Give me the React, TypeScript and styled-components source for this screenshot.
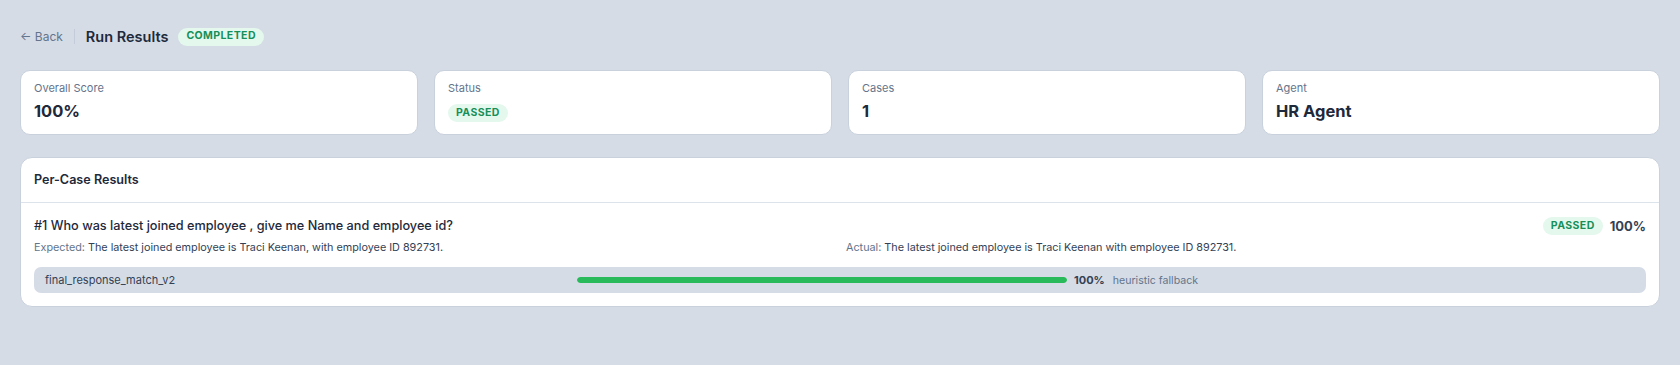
import styled, { createGlobalStyle } from "styled-components";

const GlobalStyle = createGlobalStyle`
  body {
    margin: 0;
    background: #d5dce6;
    font-family: Inter, "Noto Sans", sans-serif;
    color: #1e293b;
  }
`;

const Page = styled.div`
  padding: 20px;
`;

const Header = styled.header`
  display: flex;
  align-items: center;
  height: 33px;
  margin-bottom: 17px;
`;

const BackLink = styled.a`
  font-size: 12px;
  color: #64748b;
  text-decoration: none;
  cursor: pointer;
`;

const Divider = styled.span`
  width: 1px;
  height: 15px;
  background: #c3ccd8;
  margin: 0 11px 0 11px;
`;

const Title = styled.h1`
  font-size: 14.5px;
  font-weight: 600;
  margin: 0 10px 0 0;
  color: #1e293b;
`;

const Badge = styled.span`
  display: inline-flex;
  align-items: center;
  height: 18px;
  padding: 0 8px;
  border-radius: 9px;
  background: #e4f8ed;
  color: #178f58;
  font-size: 10.5px;
  font-weight: 700;
  letter-spacing: 0.04em;
  line-height: 1;
`;

const StatGrid = styled.div`
  display: grid;
  grid-template-columns: repeat(4, 1fr);
  gap: 16px;
  margin-bottom: 22px;
`;

const StatCard = styled.div`
  background: #fff;
  border: 1px solid #c8d1dc;
  border-radius: 10px;
  padding: 9px 13px 12px;
`;

const StatLabel = styled.div`
  font-size: 11px;
  line-height: 16px;
  color: #64748b;
  margin-bottom: 4px;
`;

const StatValue = styled.div`
  font-size: 16.5px;
  line-height: 22px;
  font-weight: 700;
  color: #1e293b;
`;

const StatBadgeRow = styled.div`
  height: 22px;
  display: flex;
  align-items: flex-end;
`;

const Panel = styled.section`
  background: #fff;
  border: 1px solid #c8d1dc;
  border-radius: 12px;
`;

const PanelHeader = styled.div`
  padding: 13px 13px;
  font-size: 12.6px;
  line-height: 18px;
  font-weight: 600;
  color: #1e293b;
  border-bottom: 1px solid #dde3ea;
`;

const CaseBody = styled.div`
  padding: 14px 13px 13px;
`;

const CaseTop = styled.div`
  display: flex;
  align-items: center;
  justify-content: space-between;
`;

const Question = styled.div`
  font-size: 12.7px;
  line-height: 18px;
  font-weight: 500;
  color: #1e293b;
`;

const CaseResult = styled.div`
  display: flex;
  align-items: center;
  gap: 7px;
`;

const CaseScore = styled.span`
  font-size: 13px;
  font-weight: 700;
  color: #334155;
`;

const Compare = styled.div`
  display: grid;
  grid-template-columns: 1fr 1fr;
  gap: 12px;
  margin-top: 5px;
  font-size: 10.8px;
  line-height: 16px;
  color: #334155;
`;

const CompareKey = styled.span`
  color: #64748b;
`;

const MetricRow = styled.div`
  display: grid;
  grid-template-columns: 525px 490px auto auto 1fr;
  align-items: center;
  column-gap: 7px;
  height: 26px;
  margin-top: 11px;
  padding: 0 11px;
  background: #d5dce6;
  border-radius: 7px;
  font-size: 11px;
  color: #334155;
`;

const Track = styled.div`
  height: 6px;
  border-radius: 3px;
  background: #e2e8f0;
  overflow: hidden;
`;

const Fill = styled.div`
  height: 100%;
  border-radius: 3px;
  background: #29bb5b;
`;

const MetricScore = styled.span`
  font-size: 11px;
  font-weight: 700;
  color: #334155;
`;

const MetricNote = styled.span`
  font-size: 10.6px;
  color: #64748b;
  margin-left: 1px;
`;

const stats = [
  { label: "Overall Score", value: "100%" },
  { label: "Status", badge: "PASSED" },
  { label: "Cases", value: "1" },
  { label: "Agent", value: "HR Agent" },
];

export default function App() {
  const score = 1;
  return (
    <Page>
      <GlobalStyle />
      <Header>
        <BackLink>← Back</BackLink>
        <Divider />
        <Title>Run Results</Title>
        <Badge>COMPLETED</Badge>
      </Header>

      <StatGrid>
        {stats.map((s) => (
          <StatCard key={s.label}>
            <StatLabel>{s.label}</StatLabel>
            {s.badge ? (
              <StatBadgeRow>
                <Badge>{s.badge}</Badge>
              </StatBadgeRow>
            ) : (
              <StatValue>{s.value}</StatValue>
            )}
          </StatCard>
        ))}
      </StatGrid>

      <Panel>
        <PanelHeader>Per-Case Results</PanelHeader>
        <CaseBody>
          <CaseTop>
            <Question>#1 Who was latest joined employee , give me Name and employee id?</Question>
            <CaseResult>
              <Badge>PASSED</Badge>
              <CaseScore>100%</CaseScore>
            </CaseResult>
          </CaseTop>
          <Compare>
            <div>
              <CompareKey>Expected:</CompareKey> The latest joined employee is Traci Keenan, with employee ID 892731.
            </div>
            <div>
              <CompareKey>Actual:</CompareKey> The latest joined employee is Traci Keenan with employee ID 892731.
            </div>
          </Compare>
          <MetricRow>
            <span>final_response_match_v2</span>
            <Track>
              <Fill style={{ width: `${score * 100}%` }} />
            </Track>
            <MetricScore>100%</MetricScore>
            <MetricNote>heuristic fallback</MetricNote>
            <span />
          </MetricRow>
        </CaseBody>
      </Panel>
    </Page>
  );
}
